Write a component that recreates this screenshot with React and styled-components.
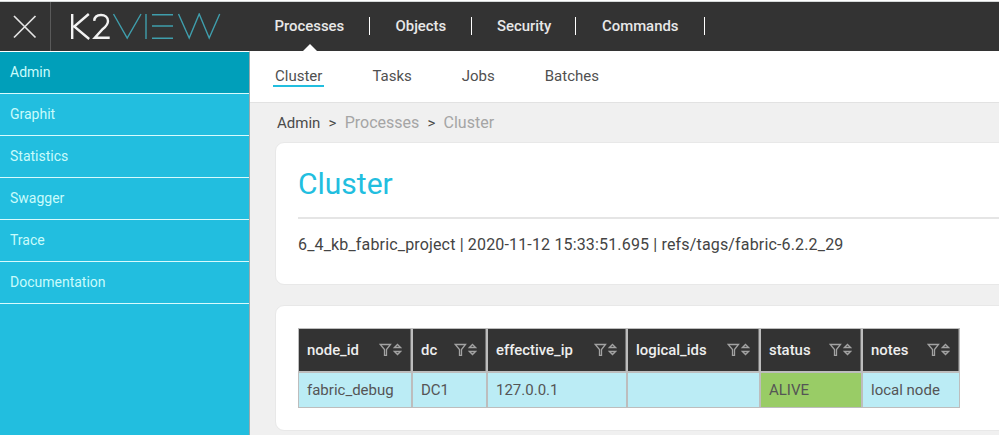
import React from 'react';
import styled, { createGlobalStyle } from 'styled-components';

const GlobalStyle = createGlobalStyle`
  *, *::before, *::after { box-sizing: border-box; }
  body { margin: 0; background: #f0f0f0; font-family: Roboto, "Liberation Sans", sans-serif; overflow: hidden; }
`;

const Page = styled.div`
  height: 435px;
  display: flex;
  flex-direction: column;
  overflow: hidden;
  border-top: 1px solid #fff;
`;

const Header = styled.header`
  flex: none;
  height: 50px;
  border-top: 1px solid #d5d8d8;
  background: #333;
  display: flex;
`;

const CloseButton = styled.button`
  width: 51px;
  padding: 0 0 0 12px;
  border: 0;
  border-right: 1px solid #5a5a5a;
  background: none;
  display: flex;
  align-items: center;
`;

const Brand = styled.div`
  width: 199px;
  padding: 11px 0 0 19px;
`;

const MainNav = styled.nav`
  display: flex;
  padding-left: 24.5px;
`;

const MainLink = styled.a`
  position: relative;
  height: 49px;
  display: flex;
  align-items: center;
  width: ${(p) => p.$width}px;
  padding-bottom: 2px;
  color: #e8e8e8;
  font-size: 14.9px;
  font-weight: 500;
  line-height: 20px;
  white-space: nowrap;

  &::before {
    content: '';
    position: absolute;
    right: ${(p) => p.$gap}px;
    top: 15px;
    width: 1px;
    height: 18px;
    background: #fff;
  }
`;

const Pointer = styled.svg`
  position: absolute;
  left: 28.5px;
  bottom: 0;
`;

const Body = styled.div`
  flex: 1;
  min-height: 0;
  display: flex;
`;

const Sidebar = styled.nav`
  flex: none;
  width: 250px;
  border-top: 1px solid #fff;
  border-right: 1px solid #9aa9ad;
  background: #22bedf;
`;

const SideLink = styled.a`
  display: block;
  height: 42px;
  padding-left: 10px;
  border-bottom: 1px solid #d8fbfd;
  background: ${(p) => (p.$active ? '#009fba' : 'transparent')};
  color: #c9fbfb;
  font-size: 14px;
  line-height: 41px;
`;

const Content = styled.main`
  flex: 1;
  min-width: 0;
`;

const SubNav = styled.nav`
  height: 52px;
  display: flex;
  background: #fff;
  border-bottom: 1px solid #e2e2e2;
  padding: 14px 0 0 23px;
`;

const SubLink = styled.a`
  height: 22px;
  padding: 0 2px;
  margin-right: ${(p) => p.$gap || 0}px;
  border-bottom: 2px solid ${(p) => (p.$active ? '#22bedf' : 'transparent')};
  color: #505050;
  font-size: 15px;
  line-height: 23px;
  white-space: nowrap;
`;

const Breadcrumb = styled.div`
  height: 39px;
  display: flex;
  padding-left: 27px;
  font-size: 16px;
  line-height: 40px;
  color: #a5a5a5;
`;

const Crumb = styled.span`
  color: ${(p) => (p.$root ? '#4a4a4a' : '#a5a5a5')};
  font-size: ${(p) => (p.$root ? 15 : 16)}px;
`;

const Chevron = styled.span`
  width: 24.3px;
  text-align: center;
  color: #4a4a4a;
  font-size: 15px;
`;

const Card = styled.section`
  height: ${(p) => p.$height}px;
  margin: 0 -30px 20px 25px;
  padding: 22px;
  background: #fff;
  border: 1px solid #e8e8e8;
  border-radius: 9px;
`;

const Title = styled.h1`
  height: 54px;
  margin: 0;
  border-bottom: 2px solid #e5e5e5;
  color: #22bedf;
  font-size: 30px;
  font-weight: 400;
  line-height: 37px;
`;

const Info = styled.p`
  margin: 15px 0 0;
  color: #444;
  font-size: 16px;
  letter-spacing: 0.16px;
  line-height: 22px;
  white-space: nowrap;
`;

const Grid = styled.div`
  display: grid;
  grid-template-columns: 114px 75px 140px 133px 102px 98px;
  grid-template-rows: 44px 36px;
`;

const HeadCell = styled.div`
  display: flex;
  align-items: center;
  justify-content: space-between;
  padding: 0 9px 0 8px;
  border: 1px solid #bdbdbd;
  box-shadow: inset -1px 0 #737373;
  background: #333;
  color: #eee;
  font-size: 14.9px;
  font-weight: 500;
`;

const Cell = styled.div`
  padding-left: 8px;
  border: 1px solid #bdbdbd;
  background: ${(p) => (p.$alive ? '#99cc66' : '#bbecf5')};
  color: #555;
  font-size: 15px;
  line-height: 34px;
  white-space: nowrap;
`;

const FilterSort = styled.svg`
  flex: none;
  margin-top: -2px;
`;

const SortIcon = () => (
  <FilterSort width="23" height="13" viewBox="0 0 23 13" fill="none" stroke="#a2a2a2" strokeWidth="1.3">
    <path d="M1.2 1.5H11.5L7.5 6.5V12.5H5.5V6.5Z" />
    <path d="M15.4 4.5L18.5 1.5L21.6 4.5ZM15.4 8.5L18.5 11.5L21.6 8.5Z" />
  </FilterSort>
);

const Logo = () => (
  <svg width="152" height="28" viewBox="0 0 152 28" fill="none">
    <g stroke="#f2f2f2" strokeWidth="2.4">
      <path d="M2.2 1V26M18.8 1L4.2 13.5L19.2 26" />
      <path d="M24.2 7.8C24.5 3.8 27 2 31 2C35.2 2 38 4.4 38 8C38 11.3 36 13.5 32.8 16L24.8 24.8H39.7" />
    </g>
    <g stroke="#3f9eac" strokeWidth="1.4">
      <path d="M43.5 1L57.2 25L71 1M76 1V26M82 1.7H103M82 13H103M82 25.3H103M108.5 1L119.2 25L129.2 1L139.2 25L149.7 1" />
    </g>
  </svg>
);

const mainLinks = [
  ['Processes', 121, 25.5],
  ['Objects', 101.5, 25],
  ['Security', 105, 26.5],
  ['Commands', 129, 26.5],
];
const subLinks = [['Cluster', 46], ['Tasks', 46], ['Jobs', 46], ['Batches', 0]];
const sideLinks = ['Admin', 'Graphit', 'Statistics', 'Swagger', 'Trace', 'Documentation'];
const columns = ['node_id', 'dc', 'effective_ip', 'logical_ids', 'status', 'notes'];
const row = ['fabric_debug', 'DC1', '127.0.0.1', '', 'ALIVE', 'local node'];

export default function App() {
  return (
    <Page>
      <GlobalStyle />
      <Header>
        <CloseButton aria-label="Close menu">
          <svg width="26" height="26" viewBox="0 0 26 26" stroke="#e5e5e5" strokeWidth="1.7">
            <path d="M2 2L23.5 23.5M23.5 2L2 23.5" />
          </svg>
        </CloseButton>
        <Brand><Logo /></Brand>
        <MainNav>
          {mainLinks.map(([label, width, gap], i) => (
            <MainLink key={label} $width={width} $gap={gap}>
              {label}
              {i === 0 && (
                <Pointer width="14" height="7" viewBox="0 0 14 7"><path d="M0 7L7 0L14 7Z" fill="#fff" /></Pointer>
              )}
            </MainLink>
          ))}
        </MainNav>
      </Header>
      <Body>
        <Sidebar>
          {sideLinks.map((label, i) => <SideLink key={label} $active={i === 0}>{label}</SideLink>)}
        </Sidebar>
        <Content>
          <SubNav>
            {subLinks.map(([label, gap], i) => (
              <SubLink key={label} $gap={gap} $active={i === 0}>{label}</SubLink>
            ))}
          </SubNav>
          <Breadcrumb>
            <Crumb $root>Admin</Crumb>
            <Chevron>&gt;</Chevron>
            <Crumb>Processes</Crumb>
            <Chevron>&gt;</Chevron>
            <Crumb>Cluster</Crumb>
          </Breadcrumb>
          <Card $height={143}>
            <Title>Cluster</Title>
            <Info>6_4_kb_fabric_project | 2020-11-12 15:33:51.695 | refs/tags/fabric-6.2.2_29</Info>
          </Card>
          <Card $height={126}>
            <Grid>
              {columns.map((name) => <HeadCell key={name}>{name}<SortIcon /></HeadCell>)}
              {row.map((value, i) => <Cell key={columns[i]} $alive={value === 'ALIVE'}>{value}</Cell>)}
            </Grid>
          </Card>
        </Content>
      </Body>
    </Page>
  );
}
